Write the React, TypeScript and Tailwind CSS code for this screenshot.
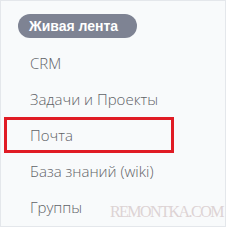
export default function App() {
  const items = ["CRM", "Задачи и Проекты", "Почта", "База знаний (wiki)", "Группы"];
  return (
    <div className="relative h-[228px] w-[230px] overflow-hidden bg-white">
      <div className="h-[227px] w-[226px] border border-[#e4e7eb] bg-[#f8fafb] pt-[13px]">
        <div className="ml-[17px] flex h-6 w-[119px] items-center rounded-full bg-[#7e8393] pl-[11px] font-['Liberation_Sans',sans-serif] text-[14px] font-bold text-white">
          Живая лента
        </div>
        <div className="mt-[7px]">
          {items.map((t) => (
            <div
              key={t}
              className={
                "ml-[3px] flex h-9 w-[170px] items-center border-[3px] pl-[23px] font-['Open_Sans',sans-serif] text-[15px] font-light text-[#5f6267] " +
                (t === "Почта" ? "border-[#e01b24]" : "border-transparent")
              }
            >
              {t}
            </div>
          ))}
        </div>
      </div>
      <div className="absolute right-[7px] bottom-[4px] font-['Liberation_Serif',serif] text-[16px] tracking-[-1.5px] text-[#ddd3d4]">
        REMONTKA.COM
      </div>
    </div>
  );
}
